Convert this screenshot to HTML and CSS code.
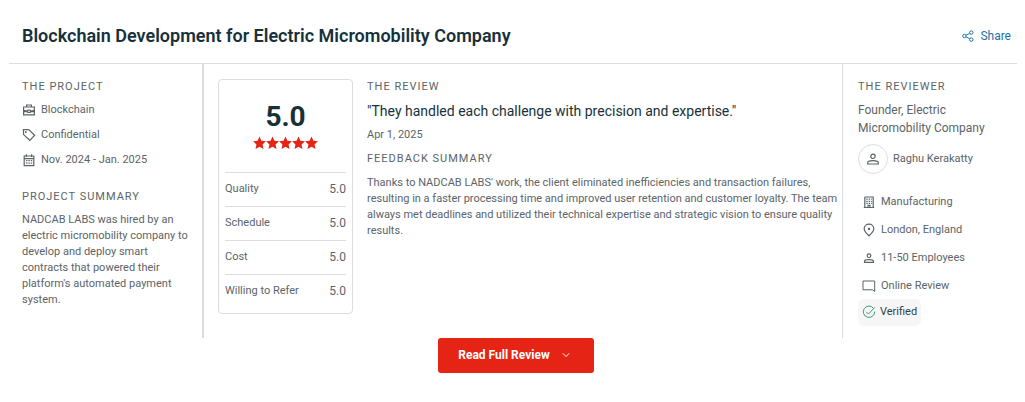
FILE: index.html
```html
<!DOCTYPE html>
<html lang="en">
<head>
  <meta charset="UTF-8">
  <meta name="viewport" content="width=device-width, initial-scale=1">
  <title>Blockchain Development for Electric Micromobility Company</title>
  <link rel="stylesheet" href="styles.css">
</head>
<body>

<article class="review">
  <header class="review-header">
    <h1 class="review-title">Blockchain Development for Electric Micromobility Company</h1>
    <a class="share" href="#share">
      <svg class="share-icon" viewBox="0 0 12 12">
        <circle cx="2.4" cy="6" r="1.7"/>
        <circle cx="9.3" cy="2.6" r="1.7"/>
        <circle cx="9.3" cy="9.6" r="1.7"/>
        <path d="M4 5.3l3.7-1.9M4 6.8l3.7 2"/>
      </svg>
      Share
    </a>
  </header>

  <div class="review-body">
    <section class="project">
      <h2 class="label">The Project</h2>
      <ul class="project-list">
        <li>
          <svg class="icon" viewBox="0 0 14 14">
            <path d="M1.6 4h10.8v7.9H1.6zM4.6 4V2h4.8v2M1.6 8.6h3.6M8.8 8.6h3.6M1.6 7.4L5 8.2M12.4 7.4L9 8.2"/>
            <rect x="5.3" y="7.2" width="3.4" height="2.2" rx="1"/>
          </svg>
          Blockchain
        </li>
        <li>
          <svg class="icon" viewBox="0 0 14 14">
            <path d="M1.4 1.6h5.3l6 5.6-4.9 5.1-6.2-5.7z"/>
            <circle class="dot" cx="3.8" cy="4" r=".9"/>
          </svg>
          Confidential
        </li>
        <li>
          <svg class="icon" viewBox="0 0 14 14">
            <path d="M2.2 3h9.6v9.6H2.2zM2.2 5.6h9.6M4.4 1.2V4M9.6 1.2V4"/>
            <path class="dashes" d="M4 7.7h6.4M4 10.2h6.4"/>
          </svg>
          Nov. 2024 - Jan. 2025
        </li>
      </ul>
      <h2 class="label">Project Summary</h2>
      <p class="text">NADCAB LABS was hired by an electric micromobility company to develop and deploy smart contracts that powered their platform's automated payment system.</p>
    </section>

    <section class="main">
      <div class="score">
        <div class="score-total">5.0</div>
        <div class="stars" role="img" aria-label="5 out of 5 stars">
          <svg class="star" viewBox="0 0 24 24"><path d="M12 0l3.5 8 8.3.9-6.200 5.700 1.800 8.400L12 18.700 4.600 23l1.800-8.400L.2 8.900 8.500 8z"/></svg>
          <svg class="star" viewBox="0 0 24 24"><path d="M12 0l3.5 8 8.3.9-6.200 5.700 1.800 8.400L12 18.700 4.600 23l1.800-8.400L.2 8.900 8.500 8z"/></svg>
          <svg class="star" viewBox="0 0 24 24"><path d="M12 0l3.5 8 8.3.9-6.200 5.700 1.800 8.400L12 18.700 4.600 23l1.800-8.400L.2 8.900 8.500 8z"/></svg>
          <svg class="star" viewBox="0 0 24 24"><path d="M12 0l3.5 8 8.3.9-6.200 5.700 1.800 8.400L12 18.700 4.600 23l1.800-8.400L.2 8.900 8.500 8z"/></svg>
          <svg class="star" viewBox="0 0 24 24"><path d="M12 0l3.5 8 8.3.9-6.200 5.700 1.800 8.400L12 18.700 4.600 23l1.800-8.400L.2 8.900 8.500 8z"/></svg>
        </div>
        <dl class="score-list">
          <div class="score-row"><dt>Quality</dt><dd>5.0</dd></div>
          <div class="score-row"><dt>Schedule</dt><dd>5.0</dd></div>
          <div class="score-row"><dt>Cost</dt><dd>5.0</dd></div>
          <div class="score-row"><dt>Willing to Refer</dt><dd>5.0</dd></div>
        </dl>
      </div>

      <div class="feedback">
        <h2 class="label">The Review</h2>
        <p class="quote">"They handled each challenge with precision and expertise."</p>
        <p class="date">Apr 1, 2025</p>
        <h2 class="label">Feedback Summary</h2>
        <p class="text">Thanks to NADCAB LABS' work, the client eliminated inefficiencies and transaction failures, resulting in a faster processing time and improved user retention and customer loyalty. The team always met deadlines and utilized their technical expertise and strategic vision to ensure quality results.</p>
      </div>
    </section>

    <section class="reviewer">
      <h2 class="label">The Reviewer</h2>
      <p class="position">Founder, Electric Micromobility Company</p>
      <div class="person">
        <span class="avatar">
          <svg class="icon" viewBox="0 0 14 14">
            <circle cx="7" cy="4.3" r="2.2"/>
            <path d="M1.7 12v-1.2c0-1.500 2.900-2.100 5.300-2.100s5.300.6 5.300 2.100V12z"/>
          </svg>
        </span>
        Raghu Kerakatty
      </div>
      <ul class="reviewer-list">
        <li>
          <svg class="icon" viewBox="0 0 14 14">
            <path d="M2.800 2h8.400v10.500M2.800 2v10.500M1.800 12.500h10.400M6 12.500v-2.200h2v2.200"/>
            <path class="dashes" d="M4.300 4.200h5.600M4.300 6.300h5.600M4.300 8.400h5.600"/>
          </svg>
          Manufacturing
        </li>
        <li>
          <svg class="icon" viewBox="0 0 14 14">
            <path d="M7 12.800C4.300 10.200 2.200 8.300 2.200 5.700a4.800 4.500 0 0 1 9.600 0c0 2.600-2.100 4.500-4.800 7.100z"/>
            <circle class="dot" cx="7" cy="5.900" r="1.200"/>
          </svg>
          London, England
        </li>
        <li>
          <svg class="icon" viewBox="0 0 14 14">
            <circle cx="7" cy="4.700" r="1.800"/>
            <path d="M2.500 11.400v-1C2.500 9.200 5 8.600 7 8.600s4.500.6 4.500 1.800v1z"/>
          </svg>
          11-50 Employees
        </li>
        <li>
          <svg class="icon thin" viewBox="0 0 14 14">
            <path d="M1 2h11.700v10.500l-2.200-1.700H1z"/>
          </svg>
          Online Review
        </li>
      </ul>
      <div class="verified">
        <svg class="icon thin" viewBox="0 0 14 14">
          <path d="M11.400 3.100A5.700 5.700 0 1 0 12.700 6.500M4.200 6.800l2.200 2.300 6.300-6.600"/>
        </svg>
        Verified
      </div>
    </section>
  </div>

  <footer class="review-footer">
    <button class="read-more" type="button">
      Read Full Review
      <svg class="chevron" viewBox="0 0 8 8"><path d="M.8 2.300L4 5.500l3.200-3.200"/></svg>
    </button>
  </footer>
</article>

</body>
</html>
```
FILE: styles.css
```css
* {
  box-sizing: border-box;
}

body {
  margin: 0;
  padding: 8px 8px 0 9px;
  background: #fff;
  color: #5b6469;
  font-family: Roboto, "Liberation Sans", sans-serif;
  font-size: 11px;
  line-height: 16px;
}

h1, h2, p, ul, dl, dd {
  margin: 0;
  padding: 0;
}

ul {
  list-style: none;
}

svg {
  display: block;
  flex: none;
}

/* Header */
.review-header {
  display: flex;
  align-items: center;
  justify-content: space-between;
  padding: 16px 6px 15px 13px;
  border-bottom: 1px solid #dbdee0;
}

.review-title {
  color: #17313b;
  font-size: 18px;
  font-weight: 600;
  line-height: 24px;
}

.share {
  display: flex;
  align-items: center;
  gap: 6px;
  color: #1f70a3;
  font-size: 12px;
  text-decoration: none;
}

.share-icon {
  width: 12px;
  height: 12px;
  fill: none;
  stroke: currentColor;
}

/* Columns */
.review-body {
  display: flex;
}

.label {
  font-size: 11px;
  font-weight: 400;
  letter-spacing: 1px;
  text-transform: uppercase;
}

.icon {
  width: 14px;
  height: 14px;
  fill: none;
  stroke: currentColor;
  stroke-width: 1.2;
}

.icon .dot {
  fill: currentColor;
  stroke: none;
}

.icon .dashes {
  stroke-dasharray: 1.4 1;
}

.icon.thin {
  stroke-width: 1;
}

.project {
  flex: none;
  width: 195px;
  padding: 15px 12px 30px 13px;
  border-right: 2px solid #dbdee0;
}

.project-list {
  display: flex;
  flex-direction: column;
  gap: 9px;
  padding: 7px 0 21px;
}

.project-list li {
  display: flex;
  align-items: center;
  gap: 5px;
}

.project .text {
  padding-top: 7px;
}

.main {
  display: flex;
  flex: 1;
  align-items: flex-start;
  gap: 14px;
  padding: 15px 2px 20px 14px;
}

/* Scores */
.score {
  flex: none;
  width: 135px;
  padding: 21px 6px 5px;
  border: 1px solid #dbdee0;
  border-radius: 4px;
}

.score-total {
  color: #17313b;
  font-size: 28px;
  font-weight: 700;
  line-height: 32px;
  text-align: center;
}

.stars {
  display: flex;
  justify-content: center;
  padding: 3px 0 22px;
}

.star {
  width: 13px;
  height: 14px;
  fill: #e62415;
}

.score-row {
  display: flex;
  align-items: center;
  justify-content: space-between;
  height: 34px;
  padding-bottom: 2px;
  border-top: 1px solid #dbdee0;
}

.score-row dd {
  font-size: 12px;
}

/* Review text */
.feedback {
  flex: 1;
}

.quote {
  padding: 6px 0;
  color: #17313b;
  font-size: 14px;
  line-height: 20px;
}

.date {
  padding-bottom: 8px;
}

.feedback .text {
  padding-top: 8px;
}

/* Reviewer */
.reviewer {
  flex: none;
  width: 175px;
  padding: 15px 16px 10px 15px;
  border-left: 1px solid #dbdee0;
}

.position {
  padding: 6px 0 7px;
  font-size: 12px;
  line-height: 18px;
}

.person {
  display: flex;
  align-items: center;
  gap: 5px;
}

.avatar {
  display: flex;
  align-items: center;
  justify-content: center;
  width: 30px;
  height: 30px;
  border: 1px solid #dbdee0;
  border-radius: 50%;
}

.reviewer-list {
  display: flex;
  flex-direction: column;
  gap: 12px;
  padding: 20px 0 5px 4px;
}

.reviewer-list li {
  display: flex;
  align-items: center;
  gap: 5px;
}

.verified {
  display: inline-flex;
  align-items: center;
  gap: 4px;
  padding: 5px 4px 6px;
  border-radius: 6px;
  background: #f6f6f6;
  color: #2f3e46;
}

.verified .icon {
  color: #3f9c78;
}

/* Button */
.review-footer {
  display: flex;
  justify-content: center;
  padding-left: 6px;
}

.read-more {
  display: flex;
  align-items: center;
  gap: 12px;
  padding: 9px 24px 10px 20px;
  border: 0;
  border-radius: 3px;
  background: #e62415;
  color: #fff;
  font-family: inherit;
  font-size: 12px;
  font-weight: 700;
  line-height: 16px;
  cursor: pointer;
}

.chevron {
  width: 8px;
  height: 8px;
  fill: none;
  stroke: currentColor;
}
```
